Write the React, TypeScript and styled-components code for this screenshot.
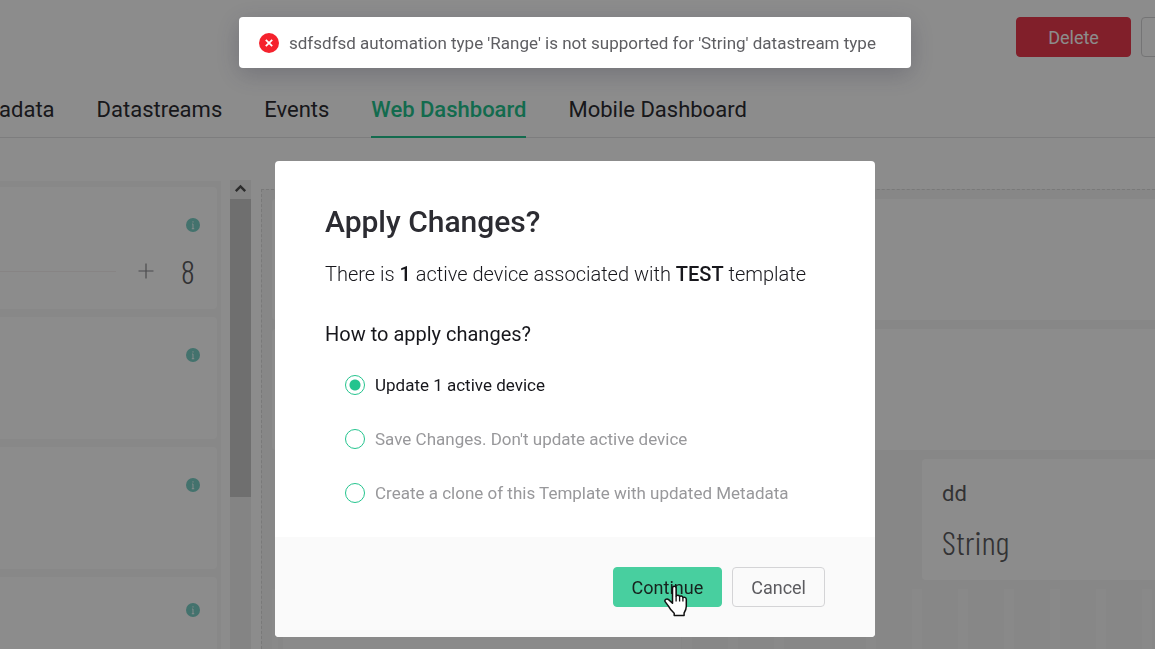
import React, { useState } from "react";
import styled, { createGlobalStyle } from "styled-components";

const GlobalStyle = createGlobalStyle`
  *, *::before, *::after { box-sizing: border-box; }
  body {
    margin: 0;
    overflow: hidden;
    background: #fff;
    color: #2c2c32;
    font-family: Roboto, "Liberation Sans", sans-serif;
    font-size: 18px;
  }
  button, input { font: inherit; margin: 0; }
`;

const Page = styled.div`
  display: flex;
  flex-direction: column;
  height: 100vh;
  overflow: hidden;
`;

const Header = styled.header`
  display: flex;
  justify-content: flex-end;
  gap: 10px;
  padding-top: 17px;
  margin-right: -101px;
`;

const Button = styled.button<{ $kind?: "danger" | "primary" }>`
  height: 40px;
  padding: 0 18px;
  border-radius: 4px;
  border: 1px solid
    ${({ $kind }) => ($kind === "danger" ? "#ec3a4e" : $kind === "primary" ? "#48cf9f" : "#d4d4d6")};
  background: ${({ $kind }) =>
    $kind === "danger" ? "#ec3a4e" : $kind === "primary" ? "#48cf9f" : "transparent"};
  color: ${({ $kind }) => ($kind === "danger" ? "#fff" : $kind === "primary" ? "#17221e" : "#5c5c60")};
`;

const HeaderButton = styled(Button)`
  width: 115px;
`;

const Tabs = styled.nav`
  display: flex;
  flex-shrink: 0;
  align-items: flex-end;
  gap: 42px;
  height: 81px;
  margin-left: -39px;
  box-shadow: inset 0 -1px #e4e4e6;
`;

const Tab = styled.a<{ $active?: boolean }>`
  padding-bottom: 13px;
  border-bottom: 2px solid ${({ $active }) => ($active ? "#24c48e" : "transparent")};
  color: ${({ $active }) => ($active ? "#24c48e" : "#2c2c32")};
  font-size: 22px;
  line-height: 26px;
  font-weight: ${({ $active }) => ($active ? 500 : 400)};
  text-decoration: none;
  white-space: nowrap;
`;

const Workspace = styled.main`
  display: flex;
  flex: 1;
  min-height: 0;
`;

const Palette = styled.aside`
  flex: 0 0 221px;
  display: flex;
  flex-direction: column;
  gap: 8px;
  margin-top: 43px;
  padding: 6px 4px 0 0;
  background: #f8f8f8;
  overflow: hidden;
`;

const PaletteCard = styled.section<{ $short?: boolean }>`
  flex: 0 0 122px;
  padding: ${({ $short }) => ($short ? 26 : 31)}px 17px 0 0;
  border-radius: 0 4px 4px 0;
  background: #fff;
`;

const InfoIcon = styled.svg`
  display: block;
  width: 14px;
  height: 14px;
  margin-left: auto;
`;

const StepRow = styled.div`
  display: flex;
  align-items: center;
  height: 40px;
  margin-top: 19px;
`;

const StepLine = styled.div`
  width: 116px;
  height: 1px;
  background: #f6f0f0;
`;

const PlusIcon = styled.svg`
  width: 16px;
  height: 16px;
  margin-left: 22px;
`;

const CondensedText = styled.span`
  color: #5c5c60;
  font-family: "Barlow Condensed", "Roboto Condensed", Roboto, sans-serif;
  font-size: 34px;
  font-weight: 300;
  line-height: 38px;
`;

const StepValue = styled(CondensedText)`
  margin-left: auto;
  padding-right: 5px;
`;

const ScrollBar = styled.div`
  flex: 0 0 21px;
  display: flex;
  flex-direction: column;
  margin: 42px 10px 0 9px;
  background: #f1f1f1;
`;

const ScrollArrow = styled.svg`
  display: block;
  width: 21px;
  height: 19px;
`;

const ScrollThumb = styled.div`
  height: 298px;
  background: #cacaca;
`;

const Canvas = styled.section`
  flex: 1;
  min-width: 0;
  display: flex;
  flex-direction: column;
  gap: 9px;
  margin-top: 51px;
  padding: 9px 0 0 10px;
  border: 1px dashed #dcdcdc;
  border-width: 1px 0 0 1px;
  background: #f6f6f6;
  overflow: hidden;
`;

const CanvasCard = styled.article`
  flex: 0 0 121px;
  border-radius: 4px 0 0 4px;
  background: #fff;
`;

const CanvasRow = styled.div`
  display: flex;
  flex: 0 0 121px;
  padding-left: 650px;
`;

const ValueCard = styled(CanvasCard)`
  flex: 1;
  display: flex;
  flex-direction: column;
  padding: 20px 0 0 20px;
`;

const ValueTitle = styled.span`
  margin-bottom: 14px;
  font-size: 22px;
  line-height: 30px;
  color: #5c5c60;
`;

const GridRow = styled.div`
  flex: 1 0 60px;
  padding-left: 11px;
  background: repeating-linear-gradient(90deg, #fafafa 0 6px, #f6f6f6 6px 42px, #fafafa 42px 46px);
`;

const GridCard = styled.article`
  width: 398px;
  height: 100%;
  background: #fbfbfb;
`;

const Overlay = styled.div`
  position: fixed;
  inset: 0;
  display: flex;
  flex-direction: column;
  align-items: center;
  gap: 93px;
  padding: 17px 5px 0 0;
  background: rgba(0, 0, 0, 0.45);
`;

const Toast = styled.div`
  flex-shrink: 0;
  display: flex;
  align-items: center;
  gap: 10px;
  min-width: 672px;
  height: 51px;
  padding: 0 20px;
  border-radius: 4px;
  background: #fff;
  color: #5e5e62;
  font-size: 17px;
  white-space: nowrap;
  box-shadow: 0 6px 24px rgba(40, 40, 60, 0.26);
`;

const ErrorIcon = styled.svg`
  width: 20px;
  height: 20px;
`;

const Dialog = styled.form`
  flex-shrink: 0;
  width: 600px;
  max-width: 100%;
  border-radius: 4px;
  background: #fff;
  overflow: hidden;
`;

const DialogBody = styled.div`
  padding: 40px 50px 32px;
`;

const DialogTitle = styled.h1`
  margin: 0 0 16px;
  font-size: 30px;
  line-height: 42px;
  font-weight: 500;
  color: #2c2c32;
`;

const Paragraph = styled.p`
  margin: 0;
  font-size: 20px;
  line-height: 30px;
  font-weight: 300;
  color: #17171c;

  strong { font-weight: 500; }
`;

const Options = styled.fieldset`
  display: flex;
  flex-direction: column;
  gap: 30px;
  min-width: 0;
  margin: 30px 0 0;
  padding: 0 0 0 20px;
  border: 0;
`;

const Question = styled.legend`
  margin: 0 0 24px -20px;
  padding: 0;
  font-size: 20px;
  line-height: 30px;
  color: #17171c;
`;

const Option = styled.label<{ $selected: boolean }>`
  display: flex;
  align-items: center;
  gap: 10px;
  font-size: 17px;
  line-height: 24px;
  color: ${({ $selected }) => ($selected ? "#17171c" : "#98989b")};
`;

const Radio = styled.input`
  appearance: none;
  flex-shrink: 0;
  width: 20px;
  height: 20px;
  border: 1px solid #24c48e;
  border-radius: 50%;
  background: #fff;

  &:checked {
    background: radial-gradient(circle, #24c48e 0 5px, #fff 6px);
  }
`;

const DialogFooter = styled.footer`
  display: flex;
  justify-content: flex-end;
  gap: 10px;
  padding: 30px 50px;
  background: #fafafa;
`;

const PointerAnchor = styled.span`
  position: relative;
  display: flex;
`;

const HandPointer = styled.svg`
  position: absolute;
  left: 51px;
  top: 18px;
  width: 24px;
  height: 33px;
  pointer-events: none;
`;

const Info = () => (
  <InfoIcon viewBox="0 0 14 14" aria-hidden="true">
    <circle cx="7" cy="7" r="7" fill="#7bcfc7" />
    <path d="M7 3.2v1.4M7 6v4.6M6 6h1M5.8 10.6h2.4" stroke="#e6faf7" strokeWidth="1.1" fill="none" />
  </InfoIcon>
);

const TABS = ["Metadata", "Datastreams", "Events", "Web Dashboard", "Mobile Dashboard"];
const OPTIONS = [
  "Update 1 active device",
  "Save Changes. Don't update active device",
  "Create a clone of this Template with updated Metadata",
];

export default function App() {
  const [selected, setSelected] = useState(0);

  return (
    <>
      <GlobalStyle />
      <Page>
        <Header>
          <HeaderButton type="button" $kind="danger">Delete</HeaderButton>
          <HeaderButton type="button" aria-label="Cancel editing" />
        </Header>
        <Tabs>
          {TABS.map((tab) => (
            <Tab key={tab} href="#" $active={tab === "Web Dashboard"}>{tab}</Tab>
          ))}
        </Tabs>
        <Workspace>
          <Palette>
            <PaletteCard>
              <Info />
              <StepRow>
                <StepLine />
                <PlusIcon viewBox="0 0 16 16" aria-hidden="true">
                  <path d="M8 0.5v15M0.5 8h15" stroke="#8a8a8e" strokeWidth="1.2" />
                </PlusIcon>
                <StepValue>8</StepValue>
              </StepRow>
            </PaletteCard>
            <PaletteCard><Info /></PaletteCard>
            <PaletteCard><Info /></PaletteCard>
            <PaletteCard $short><Info /></PaletteCard>
          </Palette>
          <ScrollBar>
            <ScrollArrow viewBox="0 0 21 19" aria-hidden="true">
              <path d="M5.8 11.2l4.7-4.8 4.7 4.8" fill="none" stroke="#505050" strokeWidth="2.4" />
            </ScrollArrow>
            <ScrollThumb />
          </ScrollBar>
          <Canvas>
            <CanvasCard />
            <CanvasCard />
            <CanvasRow>
              <ValueCard>
                <ValueTitle>dd</ValueTitle>
                <CondensedText>String</CondensedText>
              </ValueCard>
            </CanvasRow>
            <GridRow><GridCard /></GridRow>
          </Canvas>
        </Workspace>
      </Page>

      <Overlay>
        <Toast role="alert">
          <ErrorIcon viewBox="0 0 20 20" aria-hidden="true">
            <circle cx="10" cy="10" r="10" fill="#f5222d" />
            <path d="M6.8 6.8l6.4 6.4M13.2 6.8l-6.4 6.4" stroke="#fff" strokeWidth="1.8" />
          </ErrorIcon>
          sdfsdfsd automation type 'Range' is not supported for 'String' datastream type
        </Toast>
        <Dialog role="dialog" aria-labelledby="dialog-title" onSubmit={(e) => e.preventDefault()}>
          <DialogBody>
            <DialogTitle id="dialog-title">Apply Changes?</DialogTitle>
            <Paragraph>
              There is <strong>1</strong> active device associated with <strong>TEST</strong> template
            </Paragraph>
            <Options>
              <Question>How to apply changes?</Question>
              {OPTIONS.map((text, i) => (
                <Option key={text} $selected={i === selected}>
                  <Radio type="radio" name="apply" checked={i === selected} onChange={() => setSelected(i)} />
                  {text}
                </Option>
              ))}
            </Options>
          </DialogBody>
          <DialogFooter>
            <PointerAnchor>
              <Button type="submit" $kind="primary">Continue</Button>
              <HandPointer viewBox="0 0 24 33" aria-hidden="true">
                <path
                  d="M8.5 3.2c0-2.6 3.6-2.6 3.6 0v8.1c.5-1.5 3.2-1.4 3.5.4.7-1.1 3-.8 3.3.9 1-.9 3.4-.3 3.4 1.7v7c0 3-.8 4.5-2.2 6.7v2.5H10.2v-2.2C7.5 25.9 5.7 23.6 4.3 20.9L1.3 16.9c-1.3-2 1.3-3.9 3.3-2.3l3.9 3.7z"
                  fill="#fff"
                  stroke="#111"
                  strokeWidth="1.5"
                  strokeLinejoin="round"
                />
                <path d="M12.1 11.3v5.2M15.6 12v4.5M18.9 13v3.5" stroke="#111" strokeWidth="1.3" />
              </HandPointer>
            </PointerAnchor>
            <Button type="button">Cancel</Button>
          </DialogFooter>
        </Dialog>
      </Overlay>
    </>
  );
}
